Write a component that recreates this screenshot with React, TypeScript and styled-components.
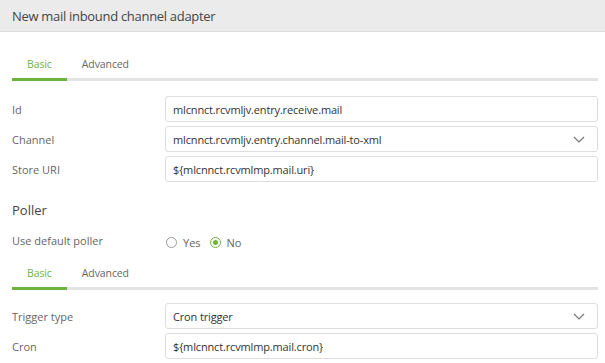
import styled, { createGlobalStyle } from 'styled-components'

const GlobalStyle = createGlobalStyle`
  html, body {
    margin: 0;
    padding: 0;
    background: #fff;
  }
  body {
    font-family: 'Open Sans', 'Noto Sans', sans-serif;
    color: #444;
  }
`

const green = '#6db33f'

const Page = styled.div`
  width: 605px;
  height: 363px;
  overflow: hidden;
  background: #fff;
`

const Header = styled.div`
  height: 31px;
  display: flex;
  align-items: center;
  padding-left: 12px;
  background: #ebebeb;
  border-bottom: 1px solid #dcdcdc;
  font-size: 13px;
  color: #454545;
  letter-spacing: -0.3px;
`

const Body = styled.div`
  padding: 16px 7px 0 12px;
`

const Tabs = styled.div`
  display: flex;
  border-bottom: 3px solid #e3e3e3;
`

const Tab = styled.div<{ $active?: boolean }>`
  height: 29px;
  padding: 1px 15px 0;
  display: flex;
  align-items: center;
  font-size: 10.5px;
  letter-spacing: -0.1px;
  color: ${p => (p.$active ? green : '#666')};
  font-weight: ${p => (p.$active ? 500 : 400)};
  margin-bottom: -3px;
  border-bottom: 3px solid ${p => (p.$active ? green : 'transparent')};
`

const Form = styled.div<{ $top: number }>`
  display: flex;
  flex-direction: column;
  gap: 4px;
  margin-top: ${p => p.$top}px;
`

const Row = styled.div`
  display: grid;
  grid-template-columns: 153px 1fr;
  align-items: center;
`

const Label = styled.div`
  font-size: 11px;
  color: #666;
`

const Field = styled.div`
  box-sizing: border-box;
  height: 26px;
  border: 1px solid #dedede;
  border-radius: 3px;
  display: flex;
  align-items: center;
  justify-content: space-between;
  padding: 0 12px 0 7px;
  font-size: 11px;
  color: #333;
  letter-spacing: -0.15px;
`

const Section = styled.div`
  margin-top: 19px;
  font-size: 13px;
  color: #444;
`

const PollerRow = styled.div`
  display: grid;
  grid-template-columns: 153px 1fr;
  align-items: center;
  margin-top: 12px;
  height: 18px;
`

const Radios = styled.div`
  display: flex;
  align-items: center;
  gap: 9px;
  padding-top: 4px;
  padding-left: 1px;
`

const RadioItem = styled.label`
  display: flex;
  align-items: center;
  gap: 6px;
  font-size: 11px;
  color: #666;
`

const Circle = styled.span<{ $checked?: boolean }>`
  box-sizing: border-box;
  width: 11px;
  height: 11px;
  border-radius: 50%;
  border: 1px solid ${p => (p.$checked ? green : '#999')};
  display: flex;
  align-items: center;
  justify-content: center;
  &::after {
    content: '';
    width: 5px;
    height: 5px;
    border-radius: 50%;
    background: ${p => (p.$checked ? green : 'transparent')};
  }
`

const SubTabs = styled(Tabs)`
  margin-top: 8px;
`

const Chevron = () => (
  <svg width="12" height="7" viewBox="0 0 12 7" fill="none">
    <path d="M1 1l5 5 5-5" stroke="#777" strokeWidth="1.2" />
  </svg>
)

export default function App() {
  return (
    <Page>
      <GlobalStyle />
      <Header>New mail inbound channel adapter</Header>
      <Body>
        <Tabs>
          <Tab $active>Basic</Tab>
          <Tab>Advanced</Tab>
        </Tabs>
        <Form $top={15}>
          <Row>
            <Label>Id</Label>
            <Field>mlcnnct.rcvmljv.entry.receive.mail</Field>
          </Row>
          <Row>
            <Label>Channel</Label>
            <Field>
              mlcnnct.rcvmljv.entry.channel.mail-to-xml
              <Chevron />
            </Field>
          </Row>
          <Row>
            <Label>Store URI</Label>
            <Field>{'${mlcnnct.rcvmlmp.mail.uri}'}</Field>
          </Row>
        </Form>
        <Section>Poller</Section>
        <PollerRow>
          <Label>Use default poller</Label>
          <Radios>
            <RadioItem>
              <Circle />
              Yes
            </RadioItem>
            <RadioItem>
              <Circle $checked />
              No
            </RadioItem>
          </Radios>
        </PollerRow>
        <SubTabs>
          <Tab $active>Basic</Tab>
          <Tab>Advanced</Tab>
        </SubTabs>
        <Form $top={13}>
          <Row>
            <Label>Trigger type</Label>
            <Field>
              Cron trigger
              <Chevron />
            </Field>
          </Row>
          <Row>
            <Label>Cron</Label>
            <Field>{'${mlcnnct.rcvmlmp.mail.cron}'}</Field>
          </Row>
        </Form>
      </Body>
    </Page>
  )
}
